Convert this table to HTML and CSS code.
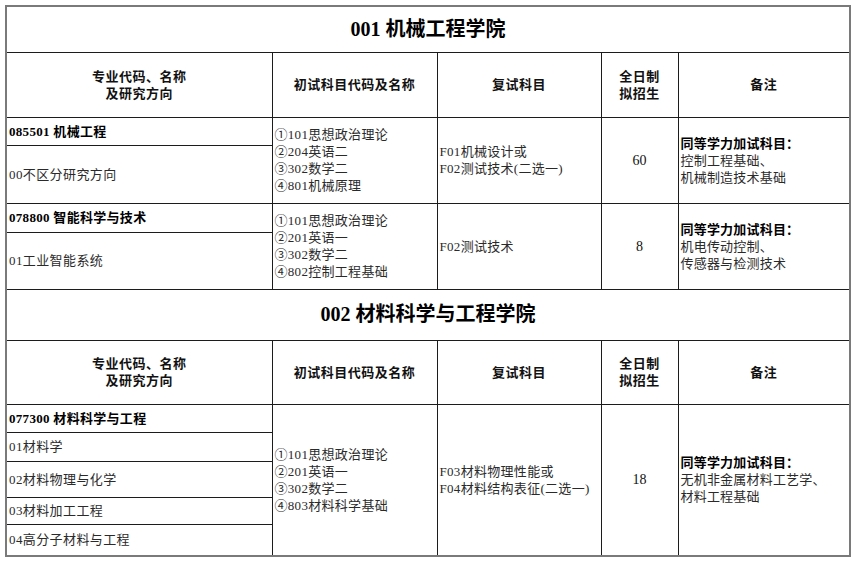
FILE: index.html
```html
<!DOCTYPE html>
<html lang="zh-CN">
<head>
<meta charset="utf-8">
<title>招生专业目录</title>
<link rel="stylesheet" href="styles.css">
</head>
<body>
<div class="page">
<table class="catalog">
  <colgroup>
    <col class="c1"><col class="c2"><col class="c3"><col class="c4"><col class="c5">
  </colgroup>
  <tbody>
    <tr class="h-title1"><td colspan="5" class="college">001 机械工程学院</td></tr>
    <tr class="h-head1">
      <th>专业代码、名称<br>及研究方向</th>
      <th>初试科目代码及名称</th>
      <th>复试科目</th>
      <th>全日制<br>拟招生</th>
      <th>备注</th>
    </tr>
    <tr class="h-28">
      <td class="major">085501 机械工程</td>
      <td rowspan="2" class="list">①101思想政治理论<br>②204英语二<br>③302数学二<br>④801机械原理</td>
      <td rowspan="2" class="list">F01机械设计或<br>F02测试技术(二选一)</td>
      <td rowspan="2" class="num">60</td>
      <td rowspan="2" class="note"><b>同等学力加试科目：</b><br>控制工程基础、<br>机械制造技术基础</td>
    </tr>
    <tr class="h-58"><td class="dir">00不区分研究方向</td></tr>
    <tr class="h-29">
      <td class="major">078800 智能科学与技术</td>
      <td rowspan="2" class="list">①101思想政治理论<br>②201英语一<br>③302数学二<br>④802控制工程基础</td>
      <td rowspan="2" class="list">F02测试技术</td>
      <td rowspan="2" class="num">8</td>
      <td rowspan="2" class="note"><b>同等学力加试科目：</b><br>机电传动控制、<br>传感器与检测技术</td>
    </tr>
    <tr class="h-57"><td class="dir">01工业智能系统</td></tr>
    <tr class="h-title2"><td colspan="5" class="college">002 材料科学与工程学院</td></tr>
    <tr class="h-head2">
      <th>专业代码、名称<br>及研究方向</th>
      <th>初试科目代码及名称</th>
      <th>复试科目</th>
      <th>全日制<br>拟招生</th>
      <th>备注</th>
    </tr>
    <tr class="h-28">
      <td class="major">077300 材料科学与工程</td>
      <td rowspan="5" class="list">①101思想政治理论<br>②201英语一<br>③302数学二<br>④803材料科学基础</td>
      <td rowspan="5" class="list">F03材料物理性能或<br>F04材料结构表征(二选一)</td>
      <td rowspan="5" class="num">18</td>
      <td rowspan="5" class="note"><b>同等学力加试科目：</b><br>无机非金属材料工艺学、<br>材料工程基础</td>
    </tr>
    <tr class="h-29"><td class="dir">01材料学</td></tr>
    <tr class="h-36"><td class="dir">02材料物理与化学</td></tr>
    <tr class="h-27"><td class="dir">03材料加工工程</td></tr>
    <tr class="h-32"><td class="dir">04高分子材料与工程</td></tr>
  </tbody>
</table>
</div>
</body>
</html>
```

FILE: styles.css
```css
html, body {
  margin: 0;
  padding: 0;
  background: #ffffff;
}

.page {
  padding: 5px 0 0 5px;
}

.catalog {
  border-collapse: collapse;
  table-layout: fixed;
  width: 844px;
  border: 2px solid #7a7a7a;
  font-family: "Liberation Serif", "Noto Sans CJK SC", serif;
  font-size: 13px;
  color: #2a2a2a;
}

.c1 { width: 266px; }
.c2 { width: 165px; }
.c3 { width: 164px; }
.c4 { width: 77px; }
.c5 { width: 172px; }

.catalog td,
.catalog th {
  border: 1px solid #1c1c1c;
  padding: 0 2px;
  vertical-align: middle;
  line-height: 17px;
  overflow: hidden;
  white-space: nowrap;
}

.catalog th {
  font-weight: 700;
  text-align: center;
  letter-spacing: 0.5px;
  color: #111;
}

.college {
  text-align: center;
  font-size: 20px;
  font-weight: 700;
  color: #000;
}

.h-title1 { height: 46px; }
.h-head1 { height: 65px; }
.h-title2 { height: 51px; }
.h-head2 { height: 64px; }
.h-27 { height: 27px; }
.h-28 { height: 28px; }
.h-29 { height: 29px; }
.h-32 { height: 32px; }
.h-36 { height: 36px; }
.h-57 { height: 57px; }
.h-58 { height: 58px; }

.major {
  font-weight: 700;
  letter-spacing: 0.3px;
  color: #000;
}

.dir {
  letter-spacing: 0.4px;
}

.list {
  letter-spacing: 0.3px;
}

.num {
  text-align: center;
  font-size: 14px;
  color: #111;
}

.note {
  padding-left: 4px;
  letter-spacing: 0.2px;
}

.note b {
  font-weight: 700;
  color: #000;
}
```
